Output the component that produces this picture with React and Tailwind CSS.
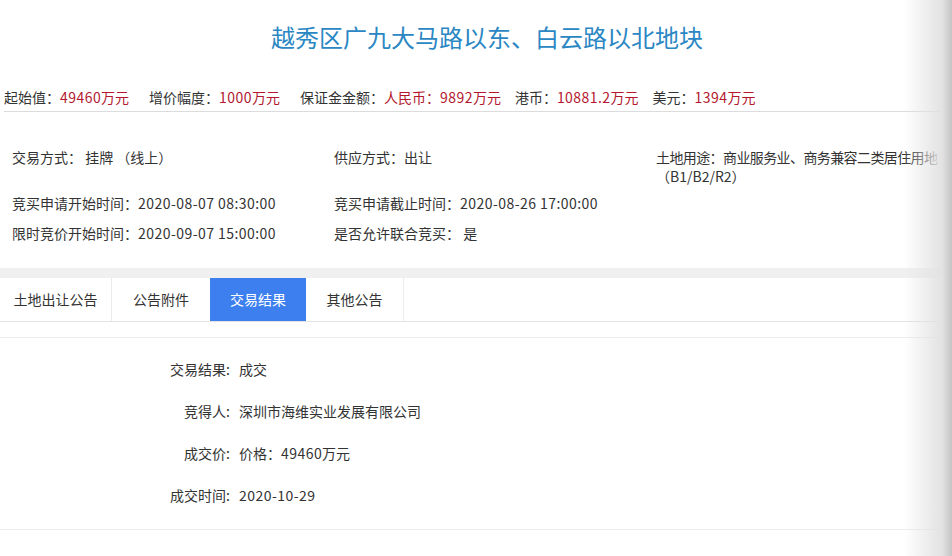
import React from "react";

const font = { fontFamily: '"Noto Sans CJK SC", "Noto Sans", sans-serif' };

function N({ children }) {
  return <span className="tracking-[0.45px]">{children}</span>;
}

export default function App() {
  return (
    <div className="relative w-[952px] h-[556px] overflow-hidden bg-white text-[#333]" style={font}>
      <div className="pt-[22px] pl-[22px] text-center">
        <h1 className="text-[24px] leading-[30px] text-[#2b87c3] font-normal">越秀区广九大马路以东、白云路以北地块</h1>
      </div>
      <div className="ml-[4px] mt-[35px] pb-[4px] border-b border-[#dcdcdc] text-[14px] leading-[20px] flex whitespace-nowrap">
        <span>起始值：<span className="text-[#b3182d]"><N>49460</N>万元</span></span>
        <span className="ml-[20px]">增价幅度：<span className="text-[#b3182d]"><N>1000</N>万元</span></span>
        <span className="ml-[20px]">保证金金额：<span className="text-[#b3182d]">人民币：<N>9892</N>万元</span></span>
        <span className="ml-[14px]">港币：<span className="text-[#b3182d]"><N>10881.2</N>万元</span></span>
        <span className="ml-[14px]">美元：<span className="text-[#b3182d]"><N>1394</N>万元</span></span>
      </div>
      <div className="pl-[12px] pt-[36px] pb-[25px] text-[14px] leading-[19px]">
        <div className="flex">
          <div className="w-[322px]">交易方式： 挂牌 （线上）</div>
          <div className="w-[322px]">供应方式：出让</div>
          <div className="w-[290px] flex flex-col whitespace-nowrap">
            <span className="tracking-[-0.6px]">土地用途：商业服务业、商务兼容二类居住用地</span>
            <span>（B1/B2/R2）</span>
          </div>
        </div>
        <div className="flex mt-[8px]">
          <div className="w-[322px]">竞买申请开始时间：<N>2020-08-07 08:30:00</N></div>
          <div className="w-[322px]">竞买申请截止时间：<N>2020-08-26 17:00:00</N></div>
        </div>
        <div className="flex mt-[11px]">
          <div className="w-[322px]">限时竞价开始时间：<N>2020-09-07 15:00:00</N></div>
          <div className="w-[322px]">是否允许联合竞买： 是</div>
        </div>
      </div>
      <div className="h-[10px] bg-[#f0f0f0]" />
      <div className="flex h-[44px] border-b border-[#e3e3e3] text-[14px]">
        <div className="w-[112px] flex items-center justify-center border-r border-[#ececec]">土地出让公告</div>
        <div className="w-[98px] flex items-center justify-center">公告附件</div>
        <div className="w-[96px] flex items-center justify-center bg-[#3d7fef] text-white">交易结果</div>
        <div className="w-[98px] flex items-center justify-center border-r border-[#ececec]">其他公告</div>
      </div>
      <div className="mt-[15px] border-t border-[#ececec] pt-[10px] pb-[13px] border-b text-[14px]">
        {[
          ["交易结果:", "成交"],
          ["竞得人:", "深圳市海维实业发展有限公司"],
          ["成交价:", <>价格：<N>49460</N>万元</>],
          ["成交时间:", <N>2020-10-29</N>],
        ].map(([k, v]) => (
          <div key={k} className="flex h-[42px] items-center">
            <div className="w-[230px] text-right">{k}</div>
            <div className="ml-[9px]">{v}</div>
          </div>
        ))}
      </div>
      <div className="absolute top-0 right-0 h-full w-[48px] bg-gradient-to-r from-[#ffffff00] via-[#e2e2e2] via-80% to-[#c4c4c4]" />
    </div>
  );
}
